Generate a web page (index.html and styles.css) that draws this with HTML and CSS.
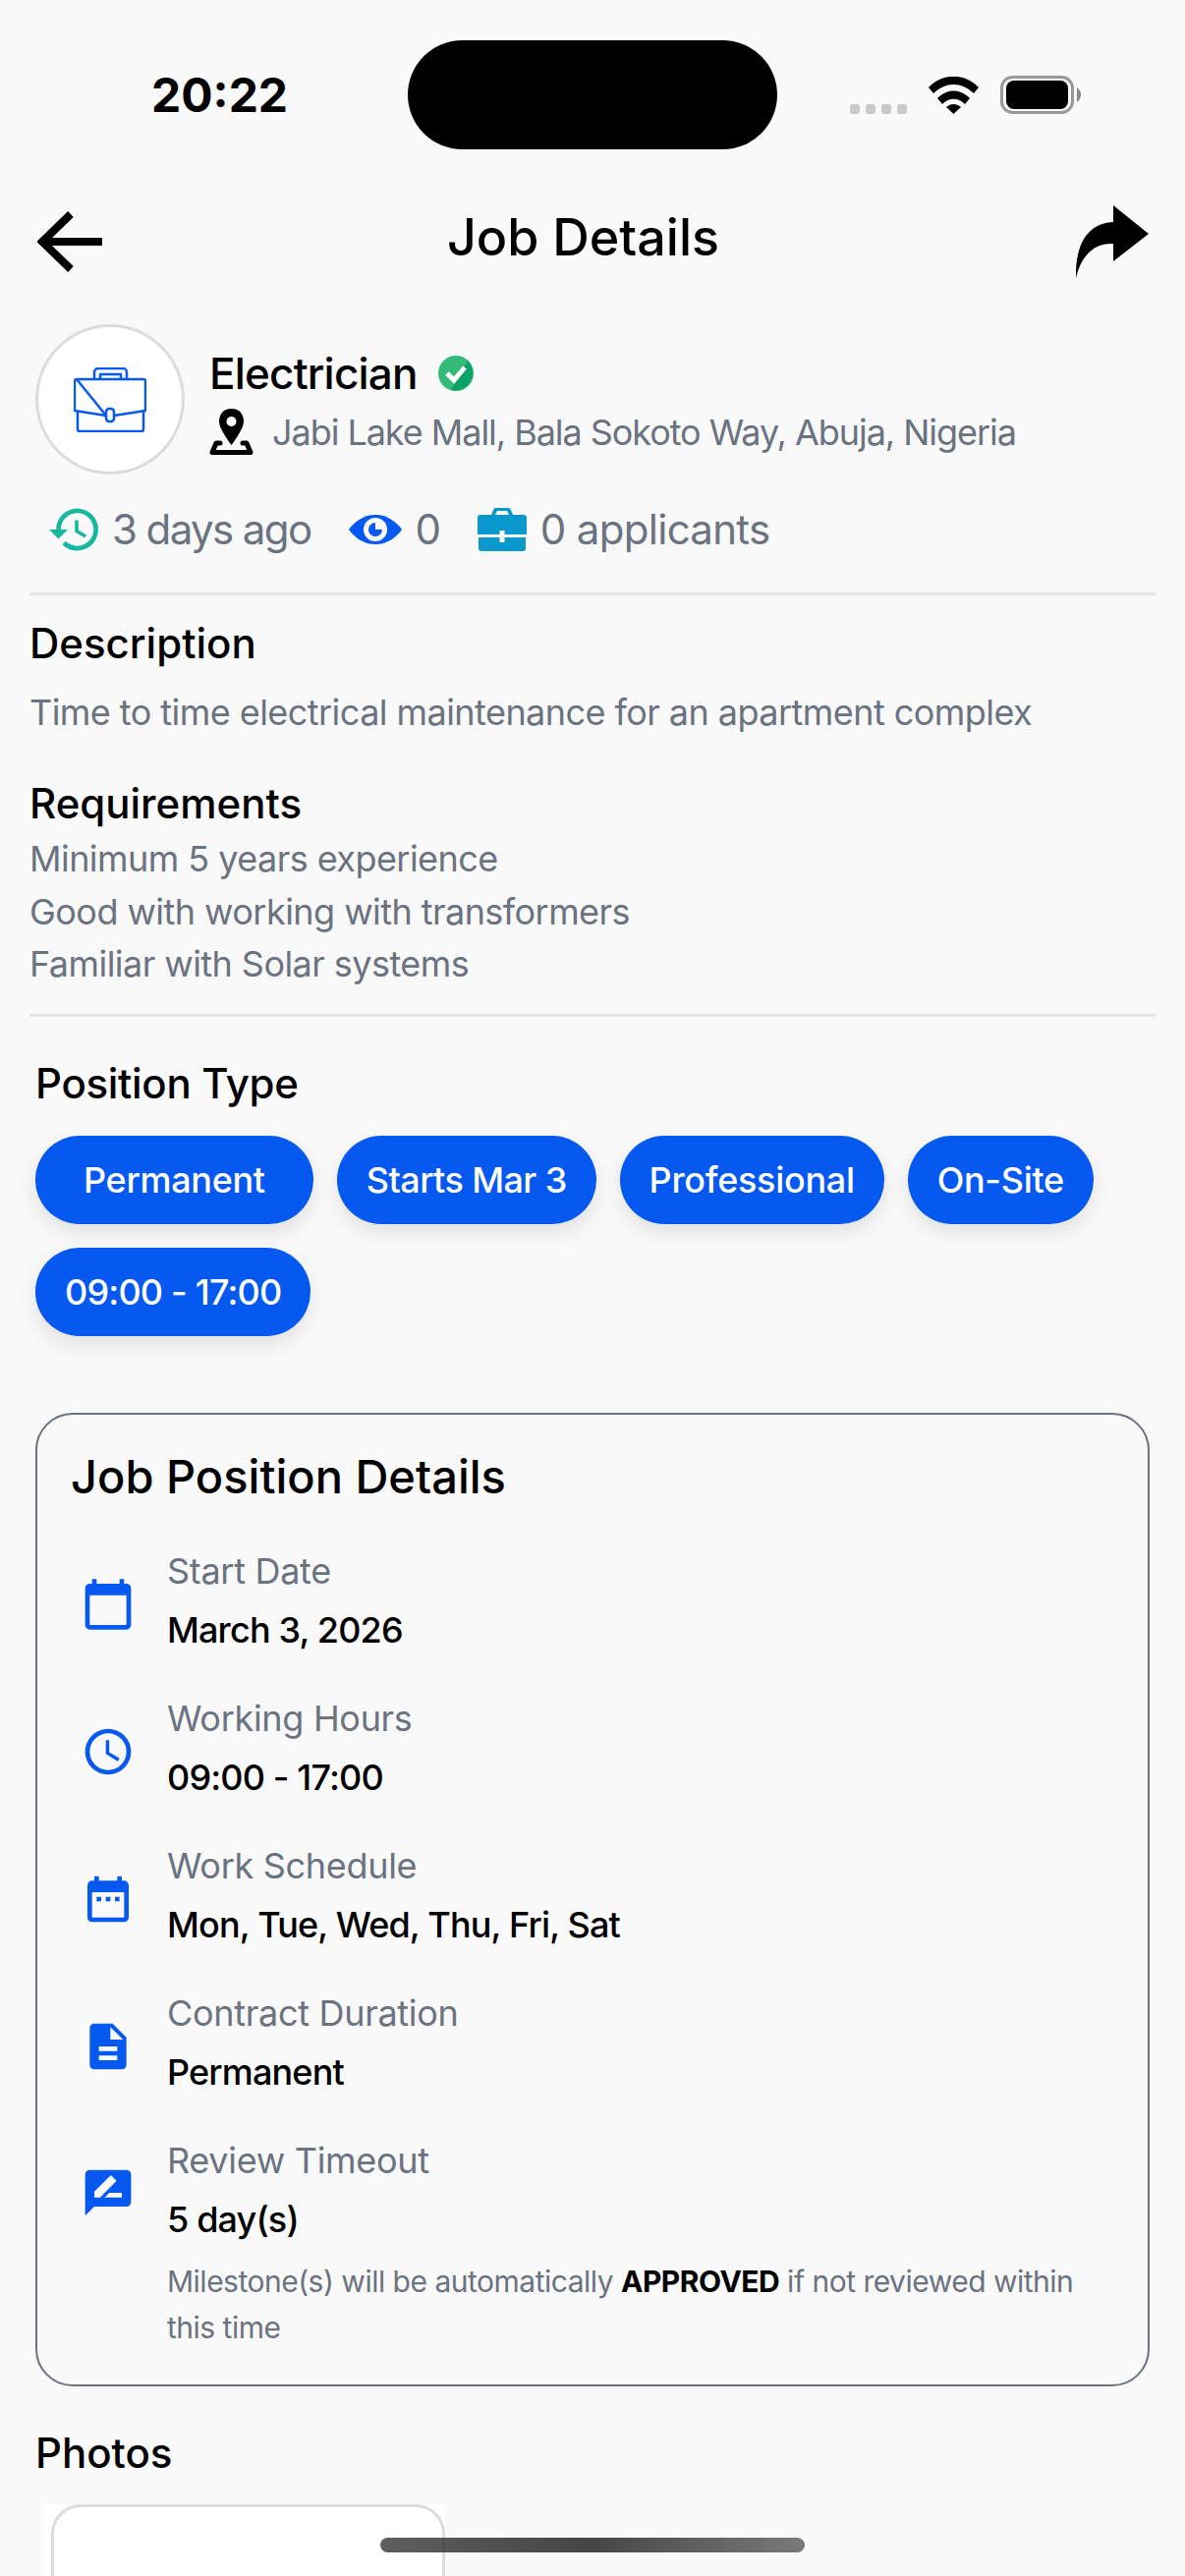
FILE: index.html
```html
<!DOCTYPE html>
<html lang="en">
<head>
  <meta charset="UTF-8" />
  <meta name="viewport" content="width=device-width, initial-scale=1.0"/>
  <title>Job Details</title>
  <link rel="stylesheet" href="styles.css">
</head>
<body>
  <div class="screen">
    <div class="status-bar">
      <span class="time">20:22</span>
      <div class="island"></div>
      <div class="status-icons">
        <svg class="signal" viewBox="0 0 58 10"><rect x="0" y="0" width="10" height="10" rx="3"/><rect x="16" y="0" width="10" height="10" rx="3"/><rect x="32" y="0" width="10" height="10" rx="3"/><rect x="48" y="0" width="10" height="10" rx="3"/></svg>
        <svg class="wifi" viewBox="0 0 51 38"><path d="M0 11C14-4 37-4 51 11l-5 6C33 5 18 5 5 17zM9 22c10-10 23-10 33 0l-5 6c-7-7-16-7-23 0zM18 31c5-4 10-4 15 0l-7.500 7z"/></svg>
        <svg class="battery" viewBox="0 0 82 39"><rect x="1.500" y="1.500" width="72" height="36" rx="11" fill="none" stroke="#999" stroke-width="3"/><rect x="6" y="5" width="63" height="29" rx="8" fill="#000"/><path d="M78 12c3 2 4 5 4 7s-1 6-4 8z" fill="#888"/></svg>
      </div>
    </div>

    <div class="nav-bar">
      <svg class="back-icon" viewBox="0 0 66 62"><path d="M34 3 5 31l29 28M5 31h61" fill="none" stroke="#000" stroke-width="8"/></svg>
      <h1>Job Details</h1>
      <svg class="share-icon" viewBox="0 0 74 74"><path d="M38 0 74 29 38 57V39C18 38 5 52 0 74-1 40 12 18 38 17z"/></svg>
    </div>

    <div class="job-head">
      <div class="avatar">
        <svg viewBox="0 0 74 66" fill="none" stroke="#0558f0" stroke-width="2.500" stroke-linejoin="round"><path d="M21 12V5a4 4 0 0 1 4-4h25a4 4 0 0 1 4 4v7M27 12V7h21v5"/><path d="M3 12h68a2 2 0 0 1 2 2v30l-32 5M33 49 1 44V14a2 2 0 0 1 2-2z"/><path d="M4 45v18a2 2 0 0 0 2 2h63a2 2 0 0 0 2-2V45"/><rect x="33" y="42" width="8" height="13" rx="3"/></svg>
      </div>
      <div class="job-info">
        <div class="job-title">
          <span>Electrician</span>
          <svg viewBox="0 0 36 36"><circle cx="18" cy="18" r="18" fill="#35bb78"/><path d="M30 5a18 18 0 0 1-17 30z" fill="#0ca168"/><path d="M9 18l7 7 11-13" fill="none" stroke="#fff" stroke-width="5"/></svg>
        </div>
        <div class="job-location">
          <svg viewBox="0 0 45 47"><path d="M22.500 0C14 0 10 6 10 13c0 8 12.500 24 12.500 24S35 21 35 13C35 6 31 0 22.500 0z"/><circle cx="22.500" cy="13" r="5" fill="#f9f9f9"/><path d="M11 35H7L3 44.500h39L38 35h-4" fill="none" stroke="#000" stroke-width="5" stroke-linejoin="round" stroke-linecap="round"/></svg>
          <span>Jabi Lake Mall, Bala Sokoto Way, Abuja, Nigeria</span>
        </div>
      </div>
    </div>

    <div class="job-stats">
      <div class="stat stat-age">
        <svg class="stat-clock" viewBox="1 3 21 18"><path d="M13 3a9 9 0 0 0-9 9H1l3.890 3.890.07.14L9 12H6c0-3.870 3.130-7 7-7s7 3.130 7 7-3.130 7-7 7c-1.930 0-3.680-.79-4.940-2.060l-1.420 1.420A8.954 8.954 0 0 0 13 21a9 9 0 0 0 0-18zm-1 5v5l4.280 2.540.72-1.210-3.500-2.080V8H12z" fill="#16b9a0"/></svg>
        <span>3 days ago</span>
      </div>
      <div class="stat">
        <svg class="stat-eye" viewBox="0 0 54 30"><path d="M27 0C40 0 49 8 54 15 49 22 40 30 27 30S5 22 0 15C5 8 14 0 27 0z" fill="#0558f0"/><circle cx="27" cy="15" r="12" fill="#f9f9f9"/><path d="M27 8a7 7 0 1 0 7 7h-7z" fill="#0558f0"/></svg>
        <span>0</span>
      </div>
      <div class="stat stat-applicants">
        <svg class="stat-case" viewBox="0 0 50 44"><path d="M14 7l2-5a3 3 0 0 1 3-2h12a3 3 0 0 1 3 2l2 5h-4l-2-4H20l-2 4z" fill="#0a98cc"/><path d="M3 7h44a3 3 0 0 1 3 3v17H0V10a3 3 0 0 1 3-3zM1 30h48v11a3 3 0 0 1-3 3H4a3 3 0 0 1-3-3z" fill="#0a98cc"/><path d="M25 23v12" stroke="#f9f9f9" stroke-width="5"/></svg>
        <span>0 applicants</span>
      </div>
    </div>

    <section class="section-desc">
      <h2>Description</h2>
      <p class="muted">Time to time electrical maintenance for an apartment complex</p>
      <h2 class="req-title">Requirements</h2>
      <p class="muted req-line">Minimum 5 years experience</p>
      <p class="muted req-line">Good with working with transformers</p>
      <p class="muted req-line">Familiar with Solar systems</p>
    </section>

    <section class="position">
      <h2>Position Type</h2>
      <div class="chips">
        <span class="chip chip-wide">Permanent</span>
        <span class="chip chip-start">Starts Mar 3</span>
        <span class="chip">Professional</span>
        <span class="chip">On-Site</span>
        <span class="chip chip-time">09:00 - 17:00</span>
      </div>
    </section>

    <section class="details-card">
      <h3>Job Position Details</h3>

      <div class="detail-row">
        <svg viewBox="0 0 24 24"><path d="M20 3h-1V1h-2v2H7V1H5v2H4a2 2 0 0 0-2 2v16a2 2 0 0 0 2 2h16a2 2 0 0 0 2-2V5a2 2 0 0 0-2-2zm0 18H4V8h16z"/></svg>
        <div>
          <div class="detail-label">Start Date</div>
          <div class="detail-value">March 3, 2026</div>
        </div>
      </div>

      <div class="detail-row">
        <svg viewBox="0 0 24 24"><path d="M12 2a10 10 0 1 0 0 20 10 10 0 0 0 0-20zm0 18a8 8 0 1 1 0-16 8 8 0 0 1 0 16zm.5-13H11v6l5.200 3.200.8-1.300-4.500-2.700z"/></svg>
        <div>
          <div class="detail-label">Working Hours</div>
          <div class="detail-value">09:00 - 17:00</div>
        </div>
      </div>

      <div class="detail-row">
        <svg viewBox="0 0 24 24"><path d="M9 11H7v2h2zm4 0h-2v2h2zm4 0h-2v2h2zm2-7h-1V2h-2v2H8V2H6v2H5a2 2 0 0 0-2 2v14a2 2 0 0 0 2 2h14a2 2 0 0 0 2-2V6a2 2 0 0 0-2-2zm0 16H5V9h14z"/></svg>
        <div>
          <div class="detail-label">Work Schedule</div>
          <div class="detail-value">Mon, Tue, Wed, Thu, Fri, Sat</div>
        </div>
      </div>

      <div class="detail-row">
        <svg viewBox="0 0 24 24"><path d="M14 2H6a2 2 0 0 0-2 2v16a2 2 0 0 0 2 2h12a2 2 0 0 0 2-2V8zm2 16H8v-2h8zm0-4H8v-2h8zm-3-5V3.500L18.500 9z"/></svg>
        <div>
          <div class="detail-label">Contract Duration</div>
          <div class="detail-value">Permanent</div>
        </div>
      </div>

      <div class="detail-row detail-row-note">
        <svg viewBox="0 0 24 24"><path d="M20 2H4a2 2 0 0 0-2 2v18l4-4h14a2 2 0 0 0 2-2V4a2 2 0 0 0-2-2zM6 14v-2.500l6.900-6.900c.2-.2.500-.2.700 0l1.800 1.800c.2.200.2.500 0 .7L8.500 14zm12 0h-7.500l2-2H18z"/></svg>
        <div>
          <div class="detail-label">Review Timeout</div>
          <div class="detail-value">5 day(s)</div>
          <p class="detail-note"><span>Milestone(s) will be automatically</span> <b>APPROVED</b> <span>if not reviewed within</span><br><span>this time</span></p>
        </div>
      </div>
    </section>

    <section class="photos">
      <h2>Photos</h2>
      <div class="photo-frame"><div class="photo-tile"></div></div>
    </section>

    <div class="home-bar"></div>
  </div>
</body>
</html>
```

FILE: styles.css
```css
body {
  margin: 0;
  background: #f9f9f9;
  font-family: Inter, 'Noto Sans', sans-serif;
  color: #000;
}

.screen {
  position: relative;
  width: 1206px;
  height: 2622px;
  overflow: hidden;
  box-sizing: border-box;
}

/* status bar */
.status-bar {
  display: flex;
  align-items: center;
  height: 111px;
  padding: 41px 0 0 154px;
  box-sizing: content-box;
}

.time {
  width: 261px;
  font-size: 48px;
  font-weight: 700;
}

.island {
  width: 376px;
  height: 111px;
  background: #000;
  border-radius: 56px;
}

.status-icons {
  display: flex;
  align-items: flex-end;
  margin-left: 74px;
  gap: 22px;
}

.signal {
  width: 58px;
  height: 10px;
  fill: #c8c8c8;
}

.wifi {
  width: 51px;
  height: 38px;
}

.battery {
  width: 82px;
  height: 39px;
}

/* header */
.nav-bar {
  display: flex;
  align-items: center;
  justify-content: space-between;
  height: 88px;
  padding: 45px 37px 0 38px;
}

.nav-bar h1 {
  margin: 0 12px 0 0;
  font-size: 52px;
  font-weight: 450;
}

.back-icon {
  width: 66px;
  height: 62px;
  margin-top: 10px;
}

.share-icon {
  width: 74px;
  height: 74px;
  margin-top: 10px;
}

.job-head {
  display: flex;
  align-items: center;
  gap: 25px;
  margin: 45px 0 0 36px;
}

.avatar {
  width: 152px;
  height: 153px;
  box-sizing: border-box;
  background: #fff;
  border: 3px solid #dcdcdc;
  border-radius: 50%;
  display: flex;
  align-items: center;
  justify-content: center;
}

.avatar svg {
  width: 74px;
  height: 66px;
}

.job-info {
  margin-top: 3px;
}

.job-title {
  display: flex;
  align-items: center;
  gap: 21px;
  font-size: 44px;
  font-weight: 500;
  letter-spacing: -0.8px;
}

.job-title svg {
  width: 36px;
  height: 36px;
}

.job-location {
  display: flex;
  align-items: center;
  gap: 19px;
  margin-top: 9px;
  font-size: 36px;
  letter-spacing: -1.05px;
  color: #6b7280;
}

.job-location svg {
  width: 45px;
  height: 47px;
}

.job-stats {
  display: flex;
  align-items: center;
  gap: 38px;
  margin: 30px 0 0 50px;
  font-size: 42px;
  letter-spacing: -1.2px;
  color: #6b7280;
}

.stat {
  display: flex;
  align-items: center;
  gap: 14px;
}

.stat-age {
  letter-spacing: -1.6px;
}

.stat-applicants {
  letter-spacing: -0.7px;
}

.stat-clock {
  width: 50px;
  height: 44px;
}

.stat-eye {
  width: 54px;
  height: 30px;
}

.stat-case {
  width: 50px;
  height: 44px;
}

.section-desc {
  margin: 39px 30px 0;
  border-top: 3px solid #e5e5e5;
  border-bottom: 3px solid #e5e5e5;
  padding: 23px 0 23px;
}

h2 {
  margin: 0;
  font-size: 42px;
  font-weight: 450;
}

.muted {
  margin: 23px 0 0;
  font-size: 36px;
  letter-spacing: -0.55px;
  color: #6b7280;
}

.req-title {
  margin: 45px 0 5px;
}

.req-line {
  margin: 0;
  line-height: 53.5px;
}

.position {
  margin: 42px 36px 0;
}

.position h2 {
  letter-spacing: -0.3px;
}

.chips {
  display: flex;
  flex-wrap: wrap;
  gap: 24px;
  margin-top: 28px;
}

.chip {
  display: flex;
  align-items: center;
  height: 90px;
  padding: 0 30px;
  border-radius: 45px;
  background: #0558f0;
  color: #fff;
  font-size: 36px;
  font-weight: 500;
  letter-spacing: -0.3px;
  box-shadow: 0 8px 20px rgba(0,0,0,0.1);
}

.chip-wide {
  padding: 0 49px;
}

.chip-start {
  letter-spacing: -0.6px;
}

.chip-time {
  letter-spacing: -0.8px;
}

.details-card {
  margin: 78px 36px 0;
  height: 991px;
  box-sizing: border-box;
  border: 2px solid #6b7280;
  border-radius: 38px;
  padding: 34px 34px 0;
}

.details-card h3 {
  margin: 0 0 23px;
  font-size: 47px;
  font-weight: 450;
}

.detail-row {
  display: flex;
  align-items: center;
  gap: 32px;
  height: 150px;
  padding-left: 10px;
}

.detail-row svg {
  width: 56px;
  height: 56px;
  margin-top: 8px;
  fill: #0558f0;
  flex-shrink: 0;
}

.detail-row-note {
  align-items: flex-start;
  height: auto;
  padding-top: 20px;
}

.detail-row-note svg {
  margin-top: 30px;
}

.detail-label {
  font-size: 36px;
  line-height: 50px;
  letter-spacing: -0.3px;
  color: #6b7280;
}

.detail-value {
  margin-top: 10px;
  font-size: 36px;
  line-height: 50px;
  font-weight: 450;
  letter-spacing: -0.85px;
}

.detail-note {
  margin: 15px 0 0;
  font-size: 30px;
  line-height: 47px;
  letter-spacing: -0.5px;
  color: #6b7280;
}

.detail-note b {
  color: #000;
}

.photos {
  margin: 42px 36px 0;
}

.photo-frame {
  width: 408px;
  height: 300px;
  margin: 27px 0 0 9px;
  background: #fff;
  padding: 0 0 0 7px;
  box-sizing: border-box;
}

.photo-tile {
  height: 100%;
  box-sizing: border-box;
  background: #fff;
  border: 3px solid #dcdcdc;
  border-radius: 30px;
}

.home-bar {
  position: absolute;
  left: 387px;
  top: 2583px;
  width: 432px;
  height: 15px;
  border-radius: 8px;
  background: linear-gradient(to right, rgba(40,40,40,0.75), rgba(50,50,50,0.9) 50%, rgba(90,90,90,0.8));
}
```
